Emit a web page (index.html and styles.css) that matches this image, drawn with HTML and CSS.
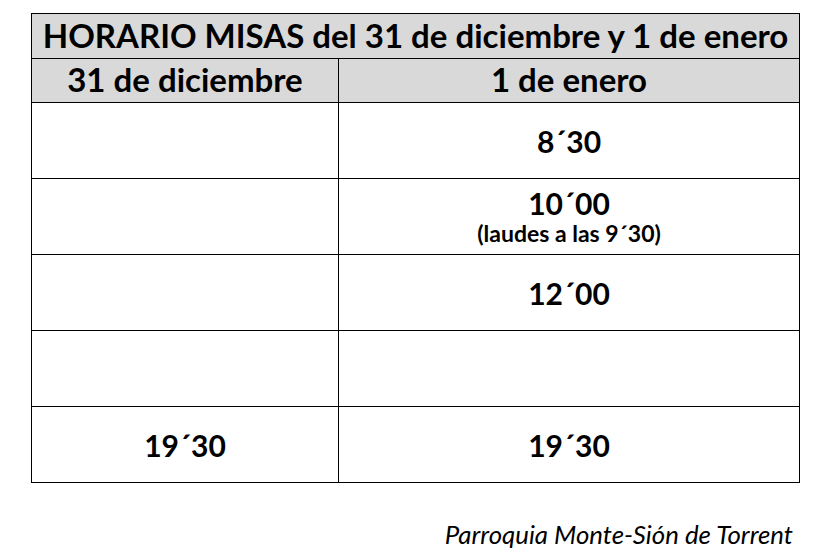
FILE: index.html
```html
<!DOCTYPE html>
<html lang="es">
<head>
<meta charset="utf-8">
<title>Horario misas</title>
<link rel="stylesheet" href="styles.css">
</head>
<body>
<div class="page">
  <table class="schedule">
    <colgroup>
      <col class="col-a">
      <col class="col-b">
    </colgroup>
    <tr class="title-row"><th colspan="2">HORARIO MISAS del 31 de diciembre y 1 de enero</th></tr>
    <tr class="head-row"><th>31 de diciembre</th><th>1 de enero</th></tr>
    <tr class="row"><td></td><td>8´30</td></tr>
    <tr class="row"><td></td><td class="stack"><div>10´00</div><div class="note">(laudes a las 9´30)</div></td></tr>
    <tr class="row"><td></td><td>12´00</td></tr>
    <tr class="row"><td></td><td></td></tr>
    <tr class="row"><td>19´30</td><td>19´30</td></tr>
  </table>
  <p class="footer">Parroquia Monte-Sión de Torrent</p>
</div>
</body>
</html>
```
FILE: styles.css
```css
html, body {
  margin: 0;
  padding: 0;
  background: #fff;
}
body {
  font-family: Lato, "Open Sans", sans-serif;
  color: #000;
}
.page {
  padding: 13px 0 0 31px;
  width: 768px;
}
.schedule {
  border-collapse: collapse;
  width: 768px;
  table-layout: fixed;
}
.col-a { width: 307px; }
.col-b { width: 461px; }
.schedule th, .schedule td {
  border: 1px solid #000;
  padding: 0;
  text-align: center;
  font-weight: 700;
}
.title-row th {
  background: #d9d9d9;
  height: 42px;
  font-size: 33px;
  line-height: 1;
  padding-bottom: 2px;
}
.head-row th {
  background: #d9d9d9;
  height: 41px;
  font-size: 33px;
  line-height: 1;
  padding-bottom: 2px;
}
.row td {
  height: 75px;
  font-size: 30px;
}
.stack {
  line-height: 1;
}
.stack .note {
  font-size: 23px;
  margin-top: 4px;
}
.footer {
  margin: 36px 6px 0 0;
  text-align: right;
  font-style: italic;
  font-size: 25.8px;
}
```
